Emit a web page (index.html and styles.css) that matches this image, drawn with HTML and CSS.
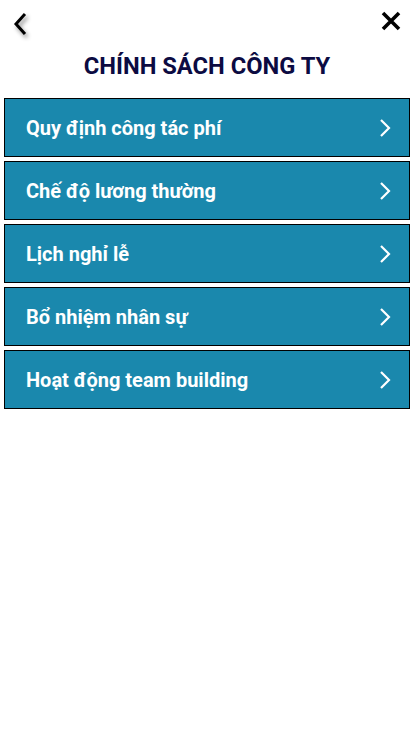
FILE: index.html
```html
<!DOCTYPE html>
<html lang="vi">
<head>
<meta charset="utf-8">
<link rel="stylesheet" href="styles.css">
</head>
<body>
<div class="page">
  <div class="topbar">
    <button class="icon-btn back" aria-label="Back">
      <svg width="16" height="24" viewBox="0 0 16 24"><path d="M12 3 L4 12 L12 21" fill="none" stroke="#000" stroke-width="3" stroke-linecap="square"/></svg>
    </button>
    <button class="icon-btn close" aria-label="Close">
      <svg width="22" height="22" viewBox="0 0 22 22"><path d="M3 3 L19 19 M19 3 L3 19" fill="none" stroke="#000" stroke-width="3.6"/></svg>
    </button>
  </div>
  <h1 class="title">CHÍNH SÁCH CÔNG TY</h1>
  <ul class="menu">
    <li class="item"><span>Quy định công tác phí</span><svg class="chev" width="14" height="20" viewBox="0 0 14 20"><path d="M3 2 L11 10 L3 18" fill="none" stroke="#fff" stroke-width="2.2"/></svg></li>
    <li class="item"><span>Chế độ lương th&#432;&#7901;ng</span><svg class="chev" width="14" height="20" viewBox="0 0 14 20"><path d="M3 2 L11 10 L3 18" fill="none" stroke="#fff" stroke-width="2.2"/></svg></li>
    <li class="item"><span>Lịch nghỉ lễ</span><svg class="chev" width="14" height="20" viewBox="0 0 14 20"><path d="M3 2 L11 10 L3 18" fill="none" stroke="#fff" stroke-width="2.2"/></svg></li>
    <li class="item"><span>Bổ nhiệm nhân sự</span><svg class="chev" width="14" height="20" viewBox="0 0 14 20"><path d="M3 2 L11 10 L3 18" fill="none" stroke="#fff" stroke-width="2.2"/></svg></li>
    <li class="item"><span>Hoạt động team building</span><svg class="chev" width="14" height="20" viewBox="0 0 14 20"><path d="M3 2 L11 10 L3 18" fill="none" stroke="#fff" stroke-width="2.2"/></svg></li>
  </ul>
</div>
</body>
</html>
```
FILE: styles.css
```css
* { box-sizing: border-box; }
html, body { margin: 0; padding: 0; background: #fff; }
body { font-family: Roboto, "Noto Sans", sans-serif; width: 414px; height: 736px; }
.page { padding: 0 4px; }
.topbar {
  display: flex;
  justify-content: space-between;
  align-items: center;
  height: 46px;
  padding: 0 8px 0 6px;
}
.icon-btn {
  border: 0; background: none; padding: 0; margin: 0;
  display: flex; align-items: center; justify-content: center;
}
.back { width: 20px; height: 26px; filter: drop-shadow(2px 3px 2px rgba(0,0,0,0.45)); margin-top: 2px; }
.close { width: 22px; height: 22px; margin-top: -4px; }
.title {
  margin: 0;
  text-align: center;
  font-size: 23.7px;
  font-weight: 700;
  color: #0c0b42;
  line-height: 40px;
  height: 52px;
}
.menu { list-style: none; margin: 0; padding: 0; display: flex; flex-direction: column; gap: 4px; }
.item {
  height: 59px;
  background: #1a88ad;
  border: 1px solid #000;
  display: flex;
  align-items: center;
  justify-content: space-between;
  padding: 0 17px 0 21px;
  color: #fff;
  font-size: 20px;
  font-weight: 700;
}
.chev { display: block; }
```
